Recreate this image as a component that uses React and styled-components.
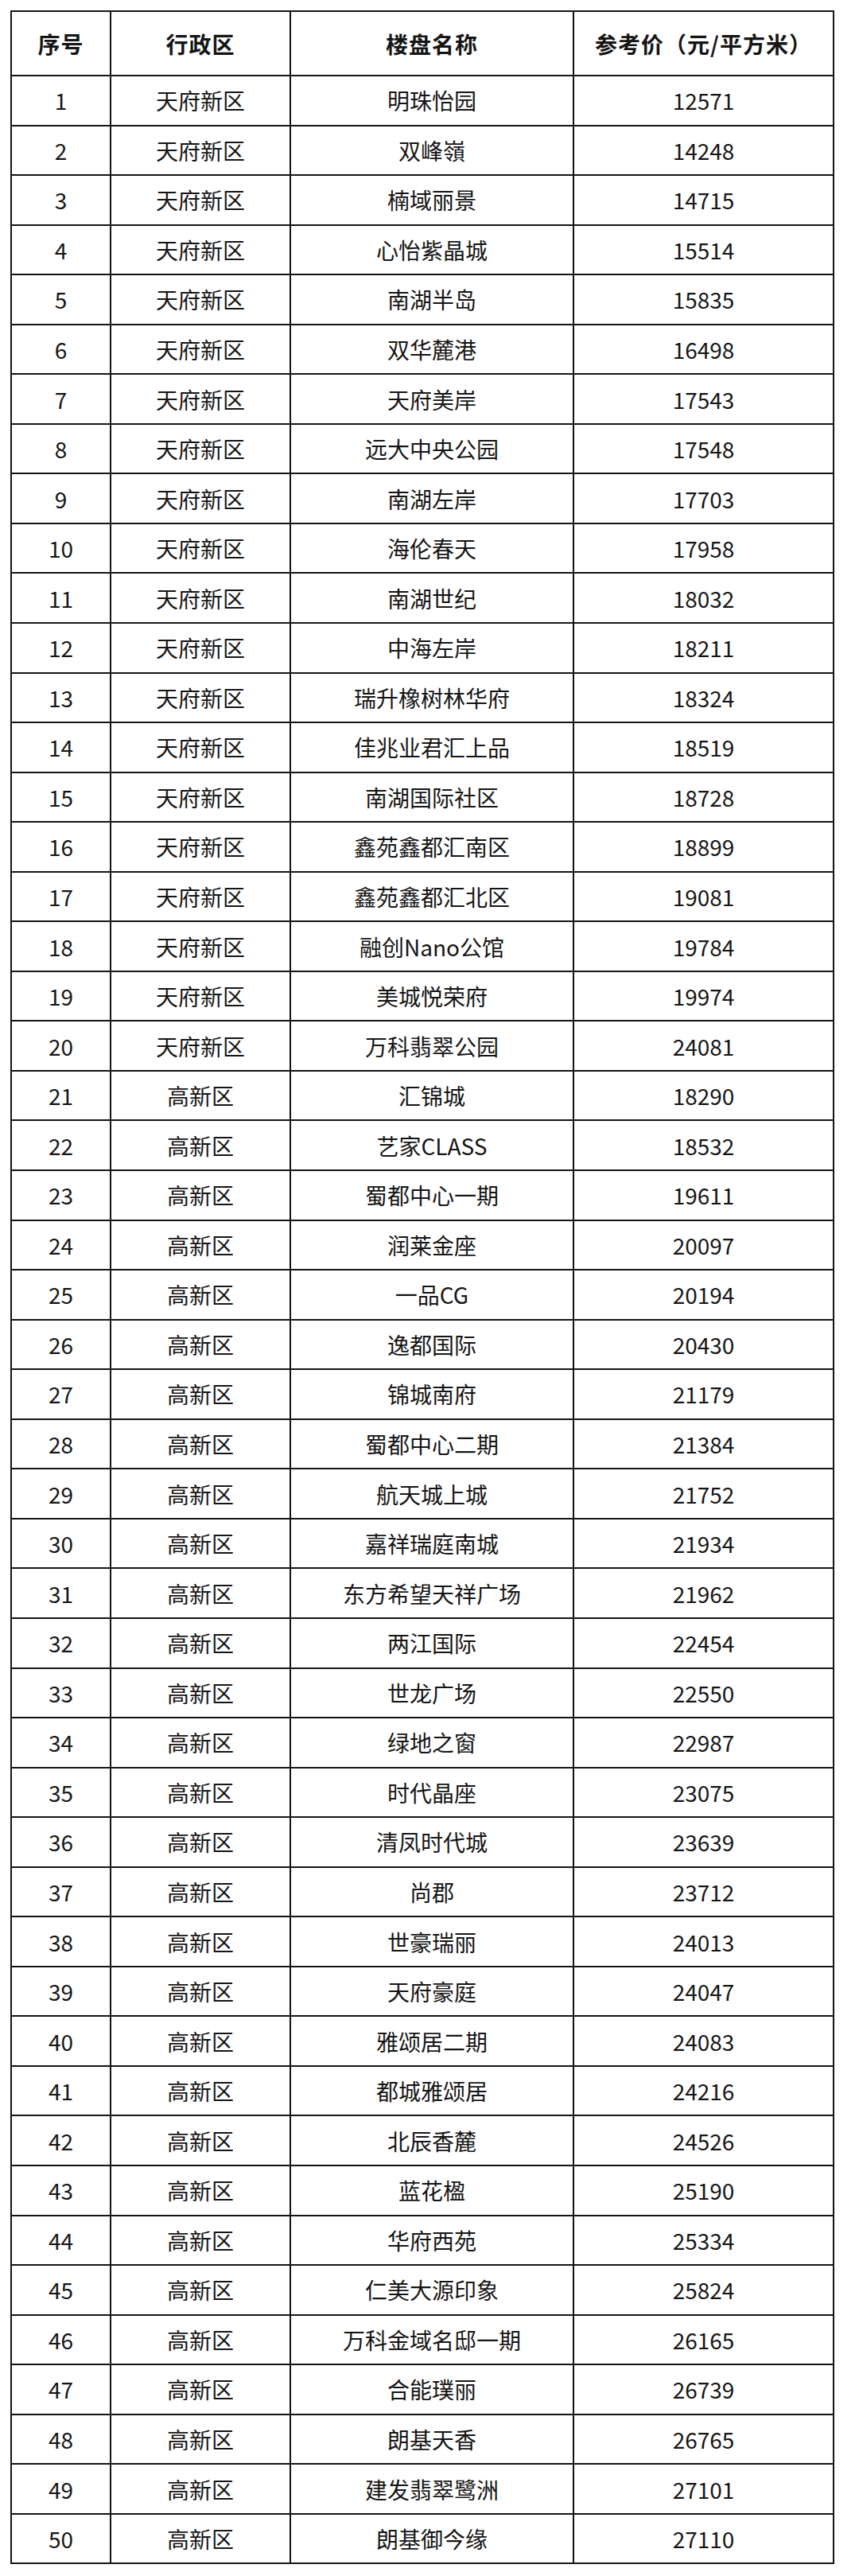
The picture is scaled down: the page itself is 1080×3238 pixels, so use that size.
import React from "react";
import styled, { createGlobalStyle } from "styled-components";

const GlobalStyle = createGlobalStyle`
  html, body {
    margin: 0;
    padding: 0;
    background: #fff;
  }
  body {
    font-family: "Noto Sans CJK SC", "Noto Sans", sans-serif;
    color: #151515;
  }
`;

const Page = styled.div`
  width: 1080px;
  height: 3238px;
  box-sizing: border-box;
  padding: 13px 0 0 13px;
  background: #fff;
  overflow: hidden;
`;

const Table = styled.div`
  display: grid;
  grid-template-columns: 123px 224px 354px 325px;
  grid-template-rows: 79px repeat(50, 60.55px);
  gap: 2px;
  padding: 2px;
  width: max-content;
  background: #141414;
`;

const Cell = styled.div`
  display: flex;
  align-items: center;
  justify-content: center;
  background: #fff;
  font-size: 28px;
  font-weight: ${(props) => (props.$head ? 700 : 400)};
  line-height: 1;
  white-space: nowrap;
  letter-spacing: ${(props) => (props.$head ? "1px" : "0")};
`;

const rows = [
  ["天府新区", "明珠怡园", "12571"],
  ["天府新区", "双峰嶺", "14248"],
  ["天府新区", "楠域丽景", "14715"],
  ["天府新区", "心怡紫晶城", "15514"],
  ["天府新区", "南湖半岛", "15835"],
  ["天府新区", "双华麓港", "16498"],
  ["天府新区", "天府美岸", "17543"],
  ["天府新区", "远大中央公园", "17548"],
  ["天府新区", "南湖左岸", "17703"],
  ["天府新区", "海伦春天", "17958"],
  ["天府新区", "南湖世纪", "18032"],
  ["天府新区", "中海左岸", "18211"],
  ["天府新区", "瑞升橡树林华府", "18324"],
  ["天府新区", "佳兆业君汇上品", "18519"],
  ["天府新区", "南湖国际社区", "18728"],
  ["天府新区", "鑫苑鑫都汇南区", "18899"],
  ["天府新区", "鑫苑鑫都汇北区", "19081"],
  ["天府新区", "融创Nano公馆", "19784"],
  ["天府新区", "美城悦荣府", "19974"],
  ["天府新区", "万科翡翠公园", "24081"],
  ["高新区", "汇锦城", "18290"],
  ["高新区", "艺家CLASS", "18532"],
  ["高新区", "蜀都中心一期", "19611"],
  ["高新区", "润莱金座", "20097"],
  ["高新区", "一品CG", "20194"],
  ["高新区", "逸都国际", "20430"],
  ["高新区", "锦城南府", "21179"],
  ["高新区", "蜀都中心二期", "21384"],
  ["高新区", "航天城上城", "21752"],
  ["高新区", "嘉祥瑞庭南城", "21934"],
  ["高新区", "东方希望天祥广场", "21962"],
  ["高新区", "两江国际", "22454"],
  ["高新区", "世龙广场", "22550"],
  ["高新区", "绿地之窗", "22987"],
  ["高新区", "时代晶座", "23075"],
  ["高新区", "清凤时代城", "23639"],
  ["高新区", "尚郡", "23712"],
  ["高新区", "世豪瑞丽", "24013"],
  ["高新区", "天府豪庭", "24047"],
  ["高新区", "雅颂居二期", "24083"],
  ["高新区", "都城雅颂居", "24216"],
  ["高新区", "北辰香麓", "24526"],
  ["高新区", "蓝花楹", "25190"],
  ["高新区", "华府西苑", "25334"],
  ["高新区", "仁美大源印象", "25824"],
  ["高新区", "万科金域名邸一期", "26165"],
  ["高新区", "合能璞丽", "26739"],
  ["高新区", "朗基天香", "26765"],
  ["高新区", "建发翡翠鹭洲", "27101"],
  ["高新区", "朗基御今缘", "27110"],
];

const headers = ["序号", "行政区", "楼盘名称", "参考价（元/平方米）"];

const App = () => {
  return (
    <Page>
      <GlobalStyle />
      <Table>
        {headers.map((h) => (
          <Cell key={h} $head>
            {h}
          </Cell>
        ))}
        {rows.map(([district, name, price], i) => (
          <React.Fragment key={name}>
            <Cell>{i + 1}</Cell>
            <Cell>{district}</Cell>
            <Cell>{name}</Cell>
            <Cell>{price}</Cell>
          </React.Fragment>
        ))}
      </Table>
    </Page>
  );
};

export default App;
